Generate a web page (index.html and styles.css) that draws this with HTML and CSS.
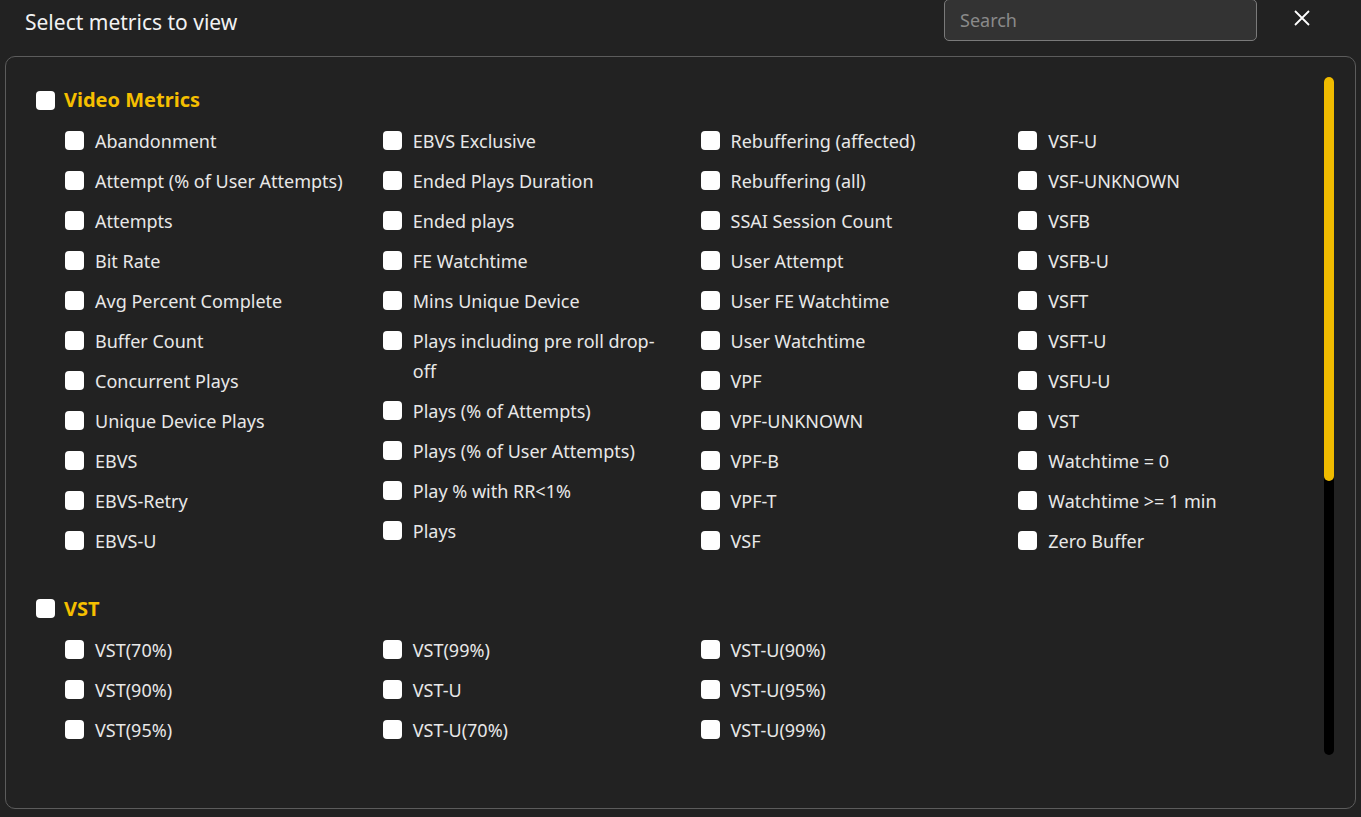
FILE: index.html
```html
<!DOCTYPE html>
<html lang="en">
<head>
    <meta charset="UTF-8">
    <meta name="viewport" content="width=device-width, initial-scale=1.0">
    <title>Select metrics to view</title>
    <link rel="stylesheet" href="styles.css">
</head>
<body>
    <div class="modal">
        <div class="modal-header">
            <div class="modal-title">Select metrics to view</div>
            <input type="text" class="search" placeholder="Search">
            <button type="button" class="close-btn" aria-label="Close">
                <svg width="16" height="16" viewBox="0 0 16 16"><path d="M1 1 L15 15 M15 1 L1 15" stroke="#fff" stroke-width="1.8" fill="none"/></svg>
            </button>
        </div>

        <div class="panel">
            <div class="panel-body">
                <div class="panel-content">
                    <div class="group">
                        <label class="group-title"><input type="checkbox"><span>Video Metrics</span></label>
                        <div class="metric-list">
                            <label class="metric"><input type="checkbox"><span>Abandonment</span></label>
                            <label class="metric"><input type="checkbox"><span>Attempt (% of User Attempts)</span></label>
                            <label class="metric"><input type="checkbox"><span>Attempts</span></label>
                            <label class="metric"><input type="checkbox"><span>Bit Rate</span></label>
                            <label class="metric"><input type="checkbox"><span>Avg Percent Complete</span></label>
                            <label class="metric"><input type="checkbox"><span>Buffer Count</span></label>
                            <label class="metric"><input type="checkbox"><span>Concurrent Plays</span></label>
                            <label class="metric"><input type="checkbox"><span>Unique Device Plays</span></label>
                            <label class="metric"><input type="checkbox"><span>EBVS</span></label>
                            <label class="metric"><input type="checkbox"><span>EBVS-Retry</span></label>
                            <label class="metric"><input type="checkbox"><span>EBVS-U</span></label>

                            <label class="metric"><input type="checkbox"><span>EBVS Exclusive</span></label>
                            <label class="metric"><input type="checkbox"><span>Ended Plays Duration</span></label>
                            <label class="metric"><input type="checkbox"><span>Ended plays</span></label>
                            <label class="metric"><input type="checkbox"><span>FE Watchtime</span></label>
                            <label class="metric"><input type="checkbox"><span>Mins Unique Device</span></label>
                            <label class="metric"><input type="checkbox"><span>Plays including pre roll drop-off</span></label>
                            <label class="metric"><input type="checkbox"><span>Plays (% of Attempts)</span></label>
                            <label class="metric"><input type="checkbox"><span>Plays (% of User Attempts)</span></label>
                            <label class="metric"><input type="checkbox"><span>Play % with RR&lt;1%</span></label>
                            <label class="metric"><input type="checkbox"><span>Plays</span></label>

                            <label class="metric"><input type="checkbox"><span>Rebuffering (affected)</span></label>
                            <label class="metric"><input type="checkbox"><span>Rebuffering (all)</span></label>
                            <label class="metric"><input type="checkbox"><span>SSAI Session Count</span></label>
                            <label class="metric"><input type="checkbox"><span>User Attempt</span></label>
                            <label class="metric"><input type="checkbox"><span>User FE Watchtime</span></label>
                            <label class="metric"><input type="checkbox"><span>User Watchtime</span></label>
                            <label class="metric"><input type="checkbox"><span>VPF</span></label>
                            <label class="metric"><input type="checkbox"><span>VPF-UNKNOWN</span></label>
                            <label class="metric"><input type="checkbox"><span>VPF-B</span></label>
                            <label class="metric"><input type="checkbox"><span>VPF-T</span></label>
                            <label class="metric"><input type="checkbox"><span>VSF</span></label>

                            <label class="metric"><input type="checkbox"><span>VSF-U</span></label>
                            <label class="metric"><input type="checkbox"><span>VSF-UNKNOWN</span></label>
                            <label class="metric"><input type="checkbox"><span>VSFB</span></label>
                            <label class="metric"><input type="checkbox"><span>VSFB-U</span></label>
                            <label class="metric"><input type="checkbox"><span>VSFT</span></label>
                            <label class="metric"><input type="checkbox"><span>VSFT-U</span></label>
                            <label class="metric"><input type="checkbox"><span>VSFU-U</span></label>
                            <label class="metric"><input type="checkbox"><span>VST</span></label>
                            <label class="metric"><input type="checkbox"><span>Watchtime = 0</span></label>
                            <label class="metric"><input type="checkbox"><span>Watchtime &gt;= 1 min</span></label>
                            <label class="metric"><input type="checkbox"><span>Zero Buffer</span></label>
                        </div>
                    </div>

                    <div class="group">
                        <label class="group-title"><input type="checkbox"><span>VST</span></label>
                        <div class="metric-list">
                            <label class="metric"><input type="checkbox"><span>VST(70%)</span></label>
                            <label class="metric"><input type="checkbox"><span>VST(90%)</span></label>
                            <label class="metric"><input type="checkbox"><span>VST(95%)</span></label>
                            <label class="metric"><input type="checkbox"><span>VST(99%)</span></label>
                            <label class="metric"><input type="checkbox"><span>VST-U</span></label>
                            <label class="metric"><input type="checkbox"><span>VST-U(70%)</span></label>
                            <label class="metric"><input type="checkbox"><span>VST-U(90%)</span></label>
                            <label class="metric"><input type="checkbox"><span>VST-U(95%)</span></label>
                            <label class="metric"><input type="checkbox"><span>VST-U(99%)</span></label>
                        </div>
                    </div>
                </div>
                <div class="scrollbar"><div class="scrollbar-thumb"></div></div>
            </div>
        </div>
    </div>
</body>
</html>
```

FILE: styles.css
```css
body {
    margin: 0;
    background: #222222;
    color: #e8e8e8;
    font-family: "Noto Sans", "Open Sans", sans-serif;
    height: 100vh;
    overflow: hidden;
}

.modal {
    display: flex;
    flex-direction: column;
    height: 100%;
    padding: 0 5px 8px 5px;
    box-sizing: border-box;
}

.modal-header {
    display: flex;
    align-items: flex-start;
    height: 56px;
}

.modal-title {
    flex: 1;
    font-size: 21px;
    color: #f2f2f2;
    padding: 8px 0 0 20px;
}

.search {
    width: 313px;
    height: 42px;
    margin-top: -1px;
    box-sizing: border-box;
    background: #333333;
    border: 1px solid #7a7a7a;
    border-radius: 5px;
    padding: 0 15px;
    color: #e8e8e8;
    font-family: inherit;
    font-size: 18px;
    outline: none;
}

.search::placeholder {
    color: #8a8a8a;
}

.close-btn {
    background: none;
    border: none;
    padding: 0;
    margin: 10px 46px 0 37px;
    width: 16px;
    height: 16px;
    cursor: pointer;
}

.close-btn svg {
    display: block;
}

.panel {
    flex: 1;
    border: 1px solid #5c5c5c;
    border-radius: 10px;
    padding: 20px 21px 53px 0;
    min-height: 0;
}

.panel-body {
    display: flex;
    height: 100%;
}

.panel-content {
    flex: 1;
    overflow: hidden;
    padding-left: 30px;
}

.scrollbar {
    flex: none;
    width: 10px;
    height: 100%;
    background: #000000;
    border-radius: 5px;
}

.scrollbar-thumb {
    height: 59.6%;
    background: #f0bb00;
    border-radius: 5px;
}

.group {
    padding-top: 12px;
}

.group + .group {
    padding-top: 34px;
}

.group-title {
    display: flex;
    align-items: center;
    gap: 9px;
    font-size: 20px;
    font-weight: bold;
    color: #f5bf00;
    line-height: 22px;
    margin-bottom: 15px;
}

.group-title input {
    width: 20px;
    height: 20px;
}

.metric-list {
    columns: 4;
    column-gap: 30px;
    width: 1241px;
    padding-left: 29px;
}

.metric {
    display: flex;
    align-items: flex-start;
    gap: 11px;
    font-size: 18px;
    line-height: 30px;
    margin-bottom: 10px;
    break-inside: avoid;
}

input[type="checkbox"] {
    appearance: none;
    -webkit-appearance: none;
    margin: 0;
    flex: none;
    width: 19px;
    height: 19px;
    background: #ffffff;
    border-radius: 4px;
}

.metric input {
    margin-top: 5px;
}
```
